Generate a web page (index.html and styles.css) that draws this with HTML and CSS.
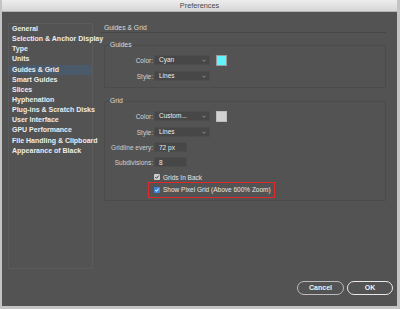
FILE: index.html
```html
<!DOCTYPE html>
<html>
<head>
<meta charset="utf-8">
<link rel="stylesheet" href="styles.css">
</head>
<body>
<div class="window">
  <div class="titlebar">Preferences</div>
  <div class="content">
    <ul class="sidebar">
      <li>General</li>
      <li>Selection &amp; Anchor Display</li>
      <li>Type</li>
      <li>Units</li>
      <li class="active">Guides &amp; Grid</li>
      <li>Smart Guides</li>
      <li>Slices</li>
      <li>Hyphenation</li>
      <li>Plug-ins &amp; Scratch Disks</li>
      <li>User Interface</li>
      <li>GPU Performance</li>
      <li>File Handling &amp; Clipboard</li>
      <li>Appearance of Black</li>
    </ul>
    <div class="pane">
      <div class="pane-title">Guides &amp; Grid</div>
      <fieldset class="group guides">
        <legend>Guides</legend>
        <div class="row">
          <span class="lbl">Color:</span>
          <span class="select">Cyan<svg class="chev" viewBox="0 0 5 3"><path d="M0.5 0.5 L2.5 2.5 L4.5 0.5" fill="none" stroke="#b5b5b5" stroke-width="0.8"/></svg></span>
          <span class="swatch cyan"></span>
        </div>
        <div class="row">
          <span class="lbl">Style:</span>
          <span class="select">Lines<svg class="chev" viewBox="0 0 5 3"><path d="M0.5 0.5 L2.5 2.5 L4.5 0.5" fill="none" stroke="#b5b5b5" stroke-width="0.8"/></svg></span>
        </div>
      </fieldset>
      <fieldset class="group grid">
        <legend>Grid</legend>
        <div class="row">
          <span class="lbl">Color:</span>
          <span class="select">Custom...<svg class="chev" viewBox="0 0 5 3"><path d="M0.5 0.5 L2.5 2.5 L4.5 0.5" fill="none" stroke="#b5b5b5" stroke-width="0.8"/></svg></span>
          <span class="swatch gray"></span>
        </div>
        <div class="row">
          <span class="lbl">Style:</span>
          <span class="select">Lines<svg class="chev" viewBox="0 0 5 3"><path d="M0.5 0.5 L2.5 2.5 L4.5 0.5" fill="none" stroke="#b5b5b5" stroke-width="0.8"/></svg></span>
        </div>
        <div class="row tight">
          <span class="lbl">Gridline every:</span>
          <span class="field">72 px</span>
        </div>
        <div class="row tight">
          <span class="lbl">Subdivisions:</span>
          <span class="field">8</span>
        </div>
        <div class="check-row">
          <span class="cb"><svg viewBox="0 0 6 6"><path d="M1.3 3 L2.5 4.3 L4.8 1.5" fill="none" stroke="#3a3a3a" stroke-width="1"/></svg></span>
          <span>Grids In Back</span>
        </div>
        <div class="highlight">
          <span class="cb on"><svg viewBox="0 0 6 6"><path d="M1.3 3 L2.5 4.3 L4.8 1.5" fill="none" stroke="#ffffff" stroke-width="1"/></svg></span>
          <span>Show Pixel Grid (Above 600% Zoom)</span>
        </div>
      </fieldset>
    </div>
  </div>
  <div class="footer">
    <button class="btn">Cancel</button>
    <button class="btn default">OK</button>
  </div>
</div>
</body>
</html>
```

FILE: styles.css
```css
* { box-sizing: border-box; }
html, body { margin: 0; padding: 0; }
body {
  width: 400px;
  height: 309px;
  background: #c4c4c4;
  font-family: "Liberation Sans", Arial, sans-serif;
  font-size: 6.5px;
  overflow: hidden;
}
.window {
  margin-left: 2px;
  width: 395px;
  height: 306px;
  background: #535353;
  display: flex;
  flex-direction: column;
  overflow: hidden;
}
.titlebar {
  height: 12px;
  line-height: 12px;
  text-align: center;
  color: #4a4a4a;
  font-size: 7.3px;
  background: linear-gradient(#ededed, #d6d6d6);
  border-bottom: 1px solid #b4b4b4;
  flex: none;
}
.content {
  display: flex;
  padding: 11px 0 0 6px;
}
.sidebar {
  list-style: none;
  margin: 0;
  padding: 0;
  width: 85px;
  height: 246px;
  border: 1px solid #5b5b5b;
  flex: none;
}
.sidebar li {
  height: 10.15px;
  line-height: 10.15px;
  padding-left: 3px;
  color: #ececec;
  font-size: 7px;
  font-weight: bold;
  white-space: nowrap;
}
.sidebar li.active {
  background: #4b5a6b;
}
.pane {
  margin-left: 7px;
  width: 286px;
}
.pane-title {
  height: 10px;
  line-height: 9px;
  padding-left: 4px;
  color: #dcdcdc;
  font-size: 6.8px;
  border-bottom: 1px solid #474747;
}
.group {
  margin: 7px 0 0 4px;
  padding: 0 0 6px 0;
  width: 282px;
  border: 1px solid #4b4b4b;
  border-radius: 2px;
  min-inline-size: 0;
}
.group legend {
  margin-left: 4px;
  padding: 0 1px;
  line-height: 10px;
  font-size: 6.8px;
  color: #dadada;
}
.group.grid {
  margin-top: 8px;
  padding-bottom: 2px;
}
.row {
  display: flex;
  align-items: center;
  height: 10px;
  margin-top: 6px;
}
.row:first-of-type { margin-top: 5px; }
.row.tight { margin-top: 5px; }
.lbl {
  width: 48px;
  margin-right: 1px;
  text-align: right;
  color: #d2d2d2;
  white-space: nowrap;
}
.select {
  position: relative;
  width: 56px;
  height: 10px;
  line-height: 10px;
  padding-left: 4px;
  background: #474747;
  border: 1px solid #4d4d4d;
  border-radius: 1px;
  color: #ededed;
  display: flex;
  align-items: center;
}
.chev {
  width: 4px;
  height: 3px;
  margin-left: auto;
  margin-right: 3px;
}
.swatch {
  width: 11px;
  height: 11px;
  margin-left: 6px;
  border: 1px solid #9a9a9a;
}
.swatch.cyan { background: #62f3fa; }
.swatch.gray { background: #d2d2d2; border-color: #bdbdbd; }
.field {
  width: 33px;
  height: 10.5px;
  line-height: 10px;
  padding-left: 4px;
  background: #474747;
  border: 1px solid #4d4d4d;
  color: #ededed;
}
.check-row, .highlight {
  display: flex;
  align-items: center;
  gap: 3px;
  color: #e6e6e6;
  white-space: nowrap;
}
.check-row {
  height: 10px;
  margin: 5px 0 0 49px;
}
.highlight {
  margin: 0 0 0 43px;
  width: 127px;
  height: 15.5px;
  padding-left: 5px;
  border: 1px solid #dc2a2e;
}
.cb {
  width: 6px;
  height: 6px;
  background: #cfcfcf;
  border-radius: 1px;
  display: flex;
}
.cb svg { width: 6px; height: 6px; }
.cb.on { background: #3d86dc; }
.footer {
  display: flex;
  justify-content: flex-end;
  gap: 3px;
  padding-right: 4px;
  margin-top: 12px;
}
.btn {
  font-family: "Liberation Sans", Arial, sans-serif;
  font-size: 7px;
  font-weight: bold;
  color: #f0f0f0;
  background: transparent;
  height: 13.5px;
  width: 47px;
  padding: 0;
  border: 1px solid #bcbcbc;
  border-radius: 7px;
}
.btn.default {
  width: 46px;
  border: 1.5px solid #e8e8e8;
}
```
